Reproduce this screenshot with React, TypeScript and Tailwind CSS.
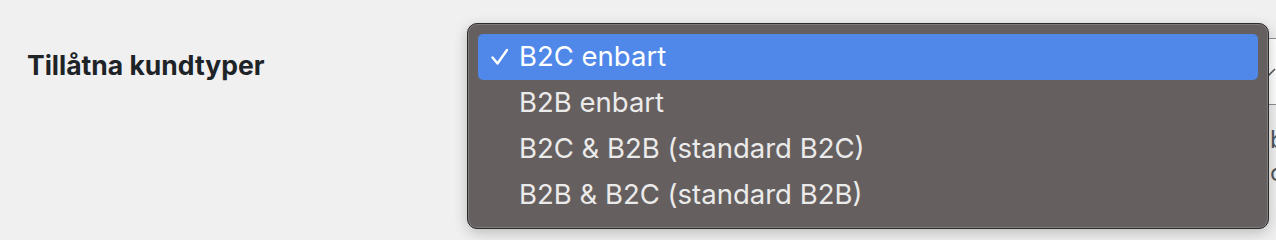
import React from "react";

const options = [
  "B2C enbart",
  "B2B enbart",
  "B2C & B2B (standard B2C)",
  "B2B & B2C (standard B2B)",
];

const App: React.FC = () => {
  const selected = 0;

  return (
    <div
      className="relative h-[240px] w-[1276px] overflow-hidden bg-[#f0f0f1]"
      style={{ fontFamily: "Inter, 'Liberation Sans', sans-serif" }}
    >
      <div className="flex">
        <div className="w-[467px] pl-[27px] pt-[49px] text-[26.5px] leading-[32px] font-bold text-[#1d2327]">
          Tillåtna kundtyper
        </div>
        {/* select behind the open menu */}
        <div className="ml-auto w-[760px] pt-[38px]">
          <div className="relative h-[67px] border-y border-[#8c8f94] bg-white">
            <svg
              className="absolute right-[-4px] top-[26px]"
              width="14"
              height="14"
              viewBox="0 0 14 14"
            >
              <path d="M2 11 L9 4" stroke="#50575e" strokeWidth="1.6" fill="none" />
            </svg>
          </div>
          <div className="pt-[18px] pl-[754px] text-[24px] leading-[33px] text-[#50575e]">
            <div>b</div>
            <div>o</div>
          </div>
        </div>
      </div>

      {/* open dropdown menu */}
      <div className="absolute left-[467px] top-[23px] w-[802px] rounded-[10px] border border-[#2b2b2b] bg-[#65605f] px-[10px] py-[10px] shadow-[0_4px_14px_rgba(0,0,0,0.22),inset_0_0_0_1px_rgba(255,255,255,0.18)]">
        {options.map((label, i) => (
          <div
            key={label}
            className={`flex h-[46px] items-center rounded-[5px] text-[27.5px] text-[#ecebeb] ${
              i === selected ? "bg-[#4f88e8] text-white" : ""
            }`}
          >
            <span className="flex w-[41px] justify-center pl-[2px]">
              {i === selected && (
                <svg width="20" height="18" viewBox="0 0 20 18">
                  <path
                    d="M2.5 9.5 L7.5 15.5 L17 2"
                    stroke="white"
                    strokeWidth="2.4"
                    fill="none"
                    strokeLinecap="round"
                    strokeLinejoin="round"
                  />
                </svg>
              )}
            </span>
            <span>{label}</span>
          </div>
        ))}
      </div>
    </div>
  );
};

export default App;
